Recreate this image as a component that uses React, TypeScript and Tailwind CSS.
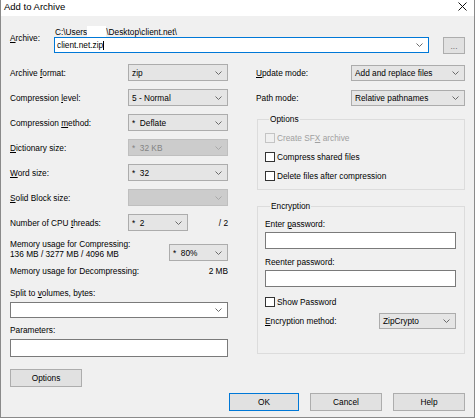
import React from "react";

const Chevron = ({ color = "#6a6a6a" }: { color?: string }) => (
  <svg width="7" height="4" viewBox="0 0 7 4" className="shrink-0">
    <path d="M0.5 0.5 L3.5 3.5 L6.5 0.5" fill="none" stroke={color} strokeWidth="1" />
  </svg>
);

interface ComboProps {
  value?: string;
  width: string;
  disabled?: boolean;
  height?: string;
}

const Combo = ({ value = "", width, disabled = false, height = "h-[17px]" }: ComboProps) => (
  <div
    className={`${width} ${height} shrink-0 flex items-center justify-between border pl-[3px] pr-[5px] ${
      disabled ? "bg-[#cccccc] border-[#bfbfbf] text-[#838383]" : "bg-[#e5e5e5] border-[#acacac]"
    }`}
  >
    <span className="whitespace-pre">{value}</span>
    <Chevron color={disabled ? "#a8a8a8" : "#6a6a6a"} />
  </div>
);

const Check = ({ label, disabled = false }: { label: React.ReactNode; disabled?: boolean }) => (
  <div className={`flex items-center h-[10px] gap-[2px] ${disabled ? "text-[#a0a0a0]" : ""}`}>
    <span
      className={`w-[10px] h-[10px] shrink-0 border ${
        disabled ? "border-[#c4c4c4] bg-[#f0f0f0]" : "border-[#333333] bg-white"
      }`}
    />
    <span>{label}</span>
  </div>
);

const Button = ({ label, width, primary = false }: { label: string; width: string; primary?: boolean }) => (
  <div
    className={`${width} h-[18px] flex items-center justify-center bg-[#e1e1e1] border ${
      primary ? "border-[#0078d7]" : "border-[#adadad]"
    }`}
  >
    {label}
  </div>
);

const Row = ({ label, children }: { label: React.ReactNode; children: React.ReactNode }) => (
  <div className="flex items-center justify-between h-[17px]">
    <span>{label}</span>
    {children}
  </div>
);

export default function App() {
  return (
    <div className="w-[476px] h-[420px] bg-white text-black text-[8.3px] leading-[10px] font-['Liberation_Sans',Arial,sans-serif]">
      <div className="w-[475px] h-[418px] flex flex-col bg-[#f0f0f0] border-x border-b border-[#8a8a8a]">
        {/* title bar */}
        <div className="h-[16px] shrink-0 bg-white flex items-center justify-between pl-[3px] pr-[7px]">
          <span className="text-[9.5px] leading-[12px] mt-[-2px]">Add to Archive</span>
          <svg width="9" height="9" viewBox="0 0 9 9" className="mt-[-3px]">
            <path d="M0.5 0.5 L8.5 8.5 M8.5 0.5 L0.5 8.5" stroke="#111" strokeWidth="1" />
          </svg>
        </div>

        <div className="flex-1 flex flex-col pt-[11px] pl-[9px] pr-[9px]">
          {/* archive path */}
          <div className="flex">
            <div className="w-[44px] shrink-0 pt-[6px]">
              <u>A</u>rchive:
            </div>
            <div className="flex flex-col">
              <div className="h-[10px] flex items-center pl-[1px]">
                <span>C:\Users</span>
                <span className="inline-block w-[19px] h-[12px] bg-white" />
                <span>\Desktop\client.net\</span>
              </div>
              <div className="flex items-start gap-[14px]">
                <div className="w-[375px] h-[16px] flex items-center justify-between bg-white border border-[#0078d7] pl-[2px] pr-[5px]">
                  <span>
                    client.net.zip<span className="inline-block w-[1px] h-[9px] bg-black align-middle" />
                  </span>
                  <Chevron />
                </div>
                <div className="w-[22px] h-[17px] flex items-center justify-center bg-[#e1e1e1] border border-[#adadad] text-[#707070] leading-[6px]">
                  ...
                </div>
              </div>
            </div>
          </div>

          <div className="flex mt-[10px] gap-[28px]">
            {/* left column */}
            <div className="w-[218px] flex flex-col">
              <div className="flex flex-col gap-[8px]">
                <Row label={<>Archive <u>f</u>ormat:</>}>
                  <Combo value="zip" width="w-[100px]" />
                </Row>
                <Row label={<>Compression <u>l</u>evel:</>}>
                  <Combo value="5 - Normal" width="w-[100px]" />
                </Row>
                <Row label={<>Compression <u>m</u>ethod:</>}>
                  <Combo value="*  Deflate" width="w-[100px]" />
                </Row>
                <Row label={<><u>D</u>ictionary size:</>}>
                  <Combo value="*  32 KB" width="w-[100px]" disabled />
                </Row>
                <Row label={<><u>W</u>ord size:</>}>
                  <Combo value="*  32" width="w-[100px]" />
                </Row>
                <Row label={<><u>S</u>olid Block size:</>}>
                  <Combo width="w-[100px]" disabled />
                </Row>
                <div className="flex items-center h-[17px]">
                  <span className="w-[118px] shrink-0">
                    Number of CPU <u>t</u>hreads:
                  </span>
                  <Combo value="*  2" width="w-[60px]" />
                  <span className="flex-1 text-right">/ 2</span>
                </div>
              </div>

              <div className="flex items-start justify-between mt-[8px]">
                <div className="flex flex-col">
                  <span>Memory usage for Compressing:</span>
                  <span>136 MB / 3277 MB / 4096 MB</span>
                </div>
                <div className="mt-[5px]">
                  <Combo value="*  80%" width="w-[59px]" />
                </div>
              </div>

              <div className="flex justify-between mt-[5px]">
                <span>Memory usage for Decompressing:</span>
                <span>2 MB</span>
              </div>

              <span className="mt-[12px]">
                Split to <u>v</u>olumes, bytes:
              </span>
              <div className="mt-[4px] w-[218px] h-[16px] flex items-center justify-end bg-white border border-[#7a7a7a] pr-[5px]">
                <Chevron />
              </div>

              <span className="mt-[7px]">Parameters:</span>
              <div className="mt-[4px] w-[218px] h-[18px] bg-white border border-[#7a7a7a]" />

              <div className="mt-[12px]">
                <Button label="Options" width="w-[72px]" />
              </div>
            </div>

            {/* right column */}
            <div className="w-[209px] flex flex-col">
              <div className="flex flex-col gap-[8px]">
                <Row label={<><u>U</u>pdate mode:</>}>
                  <Combo value="Add and replace files" width="w-[114px]" height="h-[16px]" />
                </Row>
                <Row label={<>Path mode:</>}>
                  <Combo value="Relative pathnames" width="w-[114px]" height="h-[16px]" />
                </Row>
              </div>

              <fieldset className="mt-[8px] ml-[1px] border border-[#dcdcdc] pl-[7px] pr-[8px] pt-[9px] pb-[8px] flex flex-col gap-[9px]">
                <legend className="ml-[4px] px-[1px] leading-[10px]">Options</legend>
                <Check disabled label={<>Create SF<u>X</u> archive</>} />
                <Check label="Compress shared files" />
                <Check label="Delete files after compression" />
              </fieldset>

              <fieldset className="mt-[11px] ml-[1px] border border-[#dcdcdc] pl-[7px] pr-[8px] pt-[8px] pb-[24px] flex flex-col">
                <legend className="ml-[5px] px-[1px] leading-[10px]">Encryption</legend>
                <span>
                  Enter <u>p</u>assword:
                </span>
                <div className="mt-[3px] h-[17px] bg-white border border-[#7a7a7a]" />
                <span className="mt-[8px]">Reenter password:</span>
                <div className="mt-[3px] h-[17px] bg-white border border-[#7a7a7a]" />
                <div className="mt-[10px]">
                  <Check label="Show Password" />
                </div>
                <div className="mt-[6px] flex items-center justify-between">
                  <span>
                    <u>E</u>ncryption method:
                  </span>
                  <Combo value="ZipCrypto" width="w-[77px]" height="h-[16px]" />
                </div>
              </fieldset>
            </div>
          </div>

          {/* bottom buttons */}
          <div className="flex justify-end gap-[11px] mt-[6px]">
            <Button label="OK" width="w-[70px]" primary />
            <Button label="Cancel" width="w-[72px]" />
            <Button label="Help" width="w-[72px]" />
          </div>
        </div>
      </div>
    </div>
  );
}
